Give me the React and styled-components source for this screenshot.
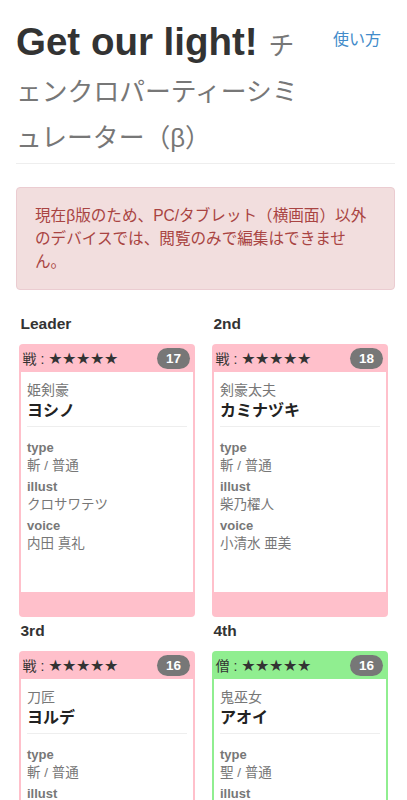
import React from 'react';
import styled, { createGlobalStyle } from 'styled-components';

const GlobalStyle = createGlobalStyle`
  body {
    margin: 0;
    background: #fff;
    color: #333;
    font-family: "Liberation Sans", "Noto Sans CJK JP", sans-serif;
  }
`;

const PARTY = [
  {
    slot: 'Leader',
    job: '戦',
    color: 'pink',
    cost: 17,
    title: '姫剣豪',
    name: 'ヨシノ',
    type: '斬 / 普通',
    illust: 'クロサワテツ',
    voice: '内田 真礼',
  },
  {
    slot: '2nd',
    job: '戦',
    color: 'pink',
    cost: 18,
    title: '剣豪太夫',
    name: 'カミナヅキ',
    type: '斬 / 普通',
    illust: '柴乃櫂人',
    voice: '小清水 亜美',
  },
  {
    slot: '3rd',
    job: '戦',
    color: 'pink',
    cost: 16,
    title: '刀匠',
    name: 'ヨルデ',
    type: '斬 / 普通',
    illust: '—',
    voice: '—',
  },
  {
    slot: '4th',
    job: '僧',
    color: 'lightgreen',
    cost: 16,
    title: '鬼巫女',
    name: 'アオイ',
    type: '聖 / 普通',
    illust: '—',
    voice: '—',
  },
];

function UnitCard({ unit }) {
  return (
    <Slot>
      <SlotLabel>{unit.slot}</SlotLabel>
      <Card color={unit.color}>
        <CardHeader>
          <JobText>
            {unit.job} : <Stars>★★★★★</Stars>
          </JobText>
          <Badge>{unit.cost}</Badge>
        </CardHeader>
        <CardBody>
          <UnitTitle>{unit.title}</UnitTitle>
          <UnitName>{unit.name}</UnitName>
          <Divider />
          <Info>
            <dt>type</dt>
            <dd>{unit.type}</dd>
            <dt>illust</dt>
            <dd>{unit.illust}</dd>
            <dt>voice</dt>
            <dd>{unit.voice}</dd>
          </Info>
        </CardBody>
      </Card>
    </Slot>
  );
}

function App() {
  return (
    <Page>
      <GlobalStyle />
      <Header>
        <Title>
          Get our light!{' '}
          <Sub lang="ja">チェンクロパーティーシミュレーター（β）</Sub>
        </Title>
        <HelpLink href="#">使い方</HelpLink>
      </Header>
      <Alert>
        現在β版のため、PC/タブレット（横画面）以外のデバイスでは、閲覧のみで編集はできません。
      </Alert>
      <Party>
        {PARTY.map(unit => (
          <UnitCard key={unit.slot} unit={unit} />
        ))}
      </Party>
    </Page>
  );
}

export default App;

const Page = styled.div`
  padding: 0 12px 40px 16px;
`;

const Header = styled.div`
  display: flex;
  justify-content: space-between;
  align-items: flex-start;
  padding-bottom: 6px;
  border-bottom: 1px solid #eee;
`;

const Title = styled.h1`
  width: 294px;
  margin: 19px 0 0;
  font-size: 38.5px;
  font-weight: 700;
  line-height: 46px;
  color: #333;
`;

const Sub = styled.small`
  font-size: 25.8px;
  font-weight: 400;
  line-height: 1;
  color: #777;
  line-break: anywhere;
`;

const HelpLink = styled.a`
  margin: 29px 14px 0 0;
  font-size: 16px;
  line-height: 22px;
  color: #428bca;
  text-decoration: none;
`;

const Alert = styled.div`
  margin-top: 23px;
  padding: 16px 19px 16px 18px;
  background: #f2dede;
  border: 1px solid #ebccd1;
  border-radius: 4px;
  color: #a94442;
  font-size: 15.6px;
  line-height: 23px;
`;

const Party = styled.div`
  display: grid;
  grid-template-columns: 176.5px 176.5px;
  column-gap: 16.5px;
  row-gap: 3px;
  margin-top: 23px;
  padding-left: 2.5px;
`;

const Slot = styled.div`
  display: flex;
  flex-direction: column;
`;

const SlotLabel = styled.div`
  padding-left: 2px;
  margin-bottom: 9px;
  font-size: 15.5px;
  font-weight: 700;
  line-height: 22px;
  color: #333;
`;

const Card = styled.div`
  display: flex;
  flex-direction: column;
  padding: 0 2px 25px;
  background: ${({ color }) => color};
  border-radius: 4px;
`;

const CardHeader = styled.div`
  display: flex;
  justify-content: space-between;
  align-items: center;
  height: 28px;
  padding: 0 3px 0 2px;
`;

const JobText = styled.span`
  font-size: 14px;
  color: #333;
  white-space: nowrap;
`;

const Stars = styled.span`
  font-family: "DejaVu Sans", sans-serif;
  font-size: 16px;
  letter-spacing: -0.4px;
`;

const Badge = styled.span`
  display: inline-flex;
  align-items: center;
  height: 21px;
  padding: 0 9px;
  border-radius: 11px;
  background: #777;
  color: #fff;
  font-size: 13.5px;
  font-weight: 700;
`;

const CardBody = styled.div`
  height: 220px;
  padding: 8px 6.5px 0;
  box-sizing: border-box;
  background: #fff;
`;

const UnitTitle = styled.div`
  font-size: 14px;
  line-height: 20px;
  color: #777;
`;

const UnitName = styled.div`
  font-size: 16px;
  font-weight: 700;
  line-height: 21px;
  color: #222;
`;

const Divider = styled.hr`
  margin: 5px 0 12px;
  border: 0;
  border-top: 1px solid #eee;
`;

const Info = styled.dl`
  margin: 0;
  color: #777;
  line-height: 18px;

  dt {
    font-size: 13px;
    font-weight: 700;
  }

  dd {
    margin: 0 0 3px;
    font-size: 13.5px;
  }
`;
